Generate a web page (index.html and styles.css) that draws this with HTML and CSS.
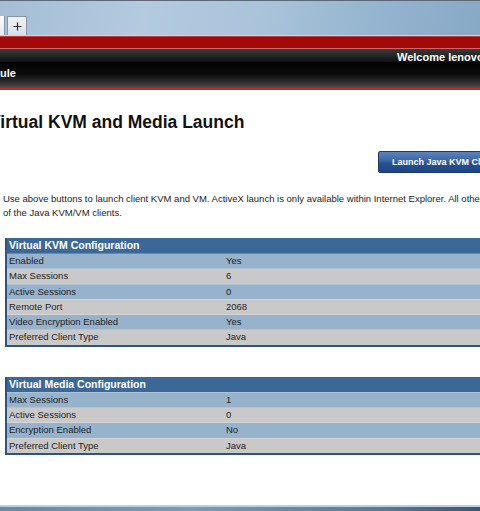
FILE: index.html
```html
<!doctype html>
<html lang="en">
<head>
    <meta charset="UTF-8">
    <title>Remote Control</title>
    <link rel="stylesheet" href="styles.css">
</head>
<body>
<div class="chrome">
    <div class="tab-end"></div>
    <div class="new-tab">
        <svg width="9" height="9" viewBox="0 0 9 9"><path d="M4.5 0.5v8M0.5 4.5h8" stroke="#2b2b2b" stroke-width="1.2"/></svg>
    </div>
</div>
<div class="viewport">
    <div class="page">
        <div class="brandline"></div>
        <div class="userbar"><span class="welcome">Welcome lenovo</span></div>
        <div class="titlebar">
            <div class="brand"><span>Integrated Management Module</span></div>
        </div>

        <h1 class="heading">Virtual KVM and Media Launch</h1>

        <div class="launch">
            <button class="btn">Launch Java KVM Client</button>
            <button class="btn">Launch ActiveX KVM Client</button>
        </div>

        <p class="note">Use above buttons to launch client KVM and VM. ActiveX launch is only available within Internet Explorer. All other browsers are limited to use<br>of the Java KVM/VM clients.</p>

        <table class="config">
            <tr><th colspan="2">Virtual KVM Configuration</th></tr>
            <tr><td class="label">Enabled</td><td>Yes</td></tr>
            <tr><td class="label">Max Sessions</td><td>6</td></tr>
            <tr><td class="label">Active Sessions</td><td>0</td></tr>
            <tr><td class="label">Remote Port</td><td>2068</td></tr>
            <tr><td class="label">Video Encryption Enabled</td><td>Yes</td></tr>
            <tr><td class="label">Preferred Client Type</td><td>Java</td></tr>
        </table>

        <table class="config media">
            <tr><th colspan="2">Virtual Media Configuration</th></tr>
            <tr><td class="label">Max Sessions</td><td>1</td></tr>
            <tr><td class="label">Active Sessions</td><td>0</td></tr>
            <tr><td class="label">Encryption Enabled</td><td>No</td></tr>
            <tr><td class="label">Preferred Client Type</td><td>Java</td></tr>
        </table>
    </div>
</div>
<div class="taskbar"></div>
</body>
</html>
```

FILE: styles.css
```css
html, body {
    margin: 0;
    height: 100%;
    overflow: hidden;
}

body {
    display: flex;
    flex-direction: column;
    background: #fff;
    font-family: "Liberation Sans", Arial, sans-serif;
}

/* browser tab strip */
.chrome {
    flex-shrink: 0;
    height: 34px;
    border-top: 1px solid #5c6875;
    border-bottom: 1px solid #c6d6e4;
    background: linear-gradient(100deg, #a3bed6 0%, #b3cadf 30%, #a9c3da 55%, #93b3ce 80%, #88a9c6 100%);
    display: flex;
    align-items: flex-end;
}

.tab-end {
    width: 4px;
    height: 19px;
    background: linear-gradient(#fbfcfd, #e3e9ef);
    border-right: 1px solid #8995a2;
}

.new-tab {
    width: 18px;
    height: 18px;
    margin-left: 2px;
    border: 1px solid #8995a2;
    border-bottom: none;
    background: linear-gradient(#f1f4f7, #d7dfe7);
    display: flex;
    align-items: center;
    justify-content: center;
}

.viewport {
    flex: 1;
    overflow: hidden;
}

/* page is scrolled a little to the right */
.page {
    margin-left: -11px;
    width: 1000px;
}

.brandline {
    height: 11px;
    background: #a20909;
    border-top: 1px solid #c23a3a;
    border-bottom: 1px solid #d06868;
}

.userbar {
    height: 13px;
    padding-left: 408px;
    background: linear-gradient(#3a3a3a, #111);
    color: #fff;
    font-weight: bold;
    font-size: 11px;
    line-height: 17px;
}

.titlebar {
    height: 26px;
    background: linear-gradient(#030303 0%, #0a0a0a 45%, #353535 85%, #505050 100%);
    border-bottom: 2px solid #b82c2c;
}

.brand {
    width: 27px;
    display: flex;
    justify-content: flex-end;
    white-space: nowrap;
    color: #fff;
    font-weight: bold;
    font-size: 11px;
    line-height: 23px;
}

.heading {
    margin: 22px 0 0;
    font-size: 17.5px;
    line-height: 21px;
    color: #111;
}

.launch {
    margin-top: 18px;
    padding-left: 389px;
    display: flex;
    gap: 12px;
}

.btn {
    height: 22px;
    padding: 0 13px;
    border: 1px solid #1b3b6e;
    border-radius: 2px;
    background: linear-gradient(#5b83be, #3a64a3 45%, #2a5190 55%, #1f4480);
    color: #fff;
    font-family: "Liberation Sans", Arial, sans-serif;
    font-weight: bold;
    font-size: 9px;
}

.note {
    margin: 19px 0 0 14px;
    font-size: 9.5px;
    line-height: 14px;
    color: #1c1c1c;
}

.config {
    margin: 18px 0 0 16px;
    width: 900px;
    border-collapse: collapse;
    border-left: 2px solid #2d5383;
    border-bottom: 2px solid #2d5383;
    font-size: 9.5px;
    color: #222;
}

.config.media {
    margin-top: 30px;
}

.config th {
    height: 15px;
    padding: 0 2px;
    background: #3c6898;
    color: #fff;
    font-size: 10.5px;
    line-height: 15px;
    text-align: left;
}

.config td {
    padding: 0 2px;
    line-height: 14.3px;
    border-top: 1px solid rgba(255, 255, 255, .22);
}

.config tr:nth-child(even) td {
    background: #97b2cb;
}

.config tr:nth-child(odd) td {
    background: #c9c9c9;
}

.config td.label {
    width: 213px;
}

.taskbar {
    flex-shrink: 0;
    height: 4px;
    border-top: 2px solid #b6d0e6;
    background: linear-gradient(90deg, #6c88a4 0%, #7e9ab5 40%, #5d7893 80%, #3f566f 100%);
}
```
